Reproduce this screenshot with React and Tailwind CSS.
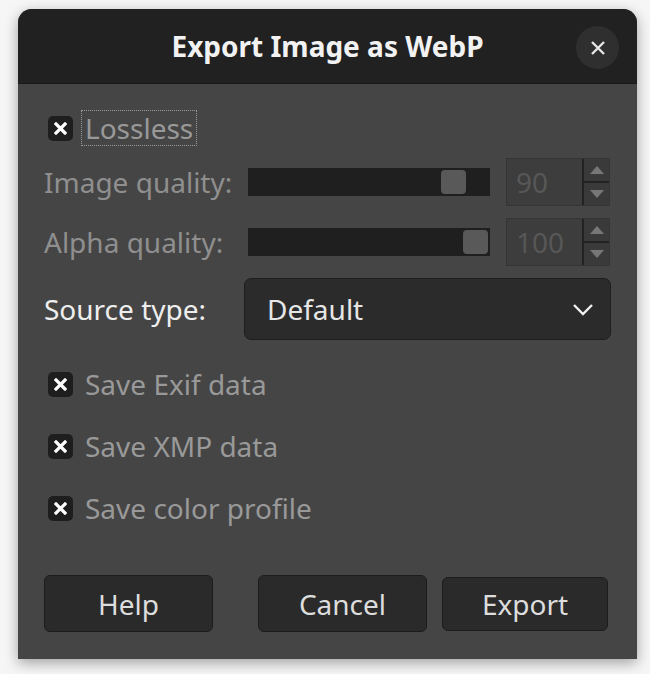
import React from 'react';

const font = { fontFamily: '"Noto Sans", "Open Sans", sans-serif' };

function Check({ label, focus }) {
  return (
    <div className="flex h-[36px] items-center pl-[4px]">
      <span className="flex h-[25px] w-[25px] shrink-0 items-center justify-center rounded-[5px] bg-[#1e1e1e]">
        <svg width="13" height="13" viewBox="0 0 13 13">
          <path d="M2 2 L11 11 M11 2 L2 11" stroke="#ffffff" strokeWidth="3.2" strokeLinecap="square" />
        </svg>
      </span>
      <span
        className={
          'ml-[9px] px-[3px] text-[28px] leading-[34px] text-[#999999] ' +
          (focus ? 'outline-1 outline-dotted outline-[#9a9a9a]' : '')
        }
      >
        {label}
      </span>
    </div>
  );
}

function Spin({ value }) {
  return (
    <div className="flex h-[48px] w-[104px] border border-[#353535]">
      <div className="flex flex-1 items-center bg-[#3d3d3d] pl-[9px] text-[28px] text-[#575757]">{value}</div>
      <div className="flex w-[27px] flex-col border-l-2 border-[#222222]">
        <div className="flex flex-1 items-center justify-center border-b-2 border-[#222222] bg-[#3a3a3a]">
          <svg width="14" height="8" viewBox="0 0 14 8"><path d="M0 8 L7 0 L14 8 Z" fill="#777777" /></svg>
        </div>
        <div className="flex flex-1 items-center justify-center bg-[#3a3a3a]">
          <svg width="14" height="8" viewBox="0 0 14 8"><path d="M0 0 L14 0 L7 8 Z" fill="#777777" /></svg>
        </div>
      </div>
    </div>
  );
}

function SliderRow({ label, pos, value }) {
  return (
    <div className="flex h-[48px] items-center">
      <span className="w-[204px] text-[28px] text-[#8f8f8f]">{label}</span>
      <div className="relative h-[28px] w-[242px] bg-[#1f1f1f]">
        <span className="absolute top-[2px] h-[24px] w-[25px] rounded-[4px] bg-[#595959]" style={{ left: pos }} />
      </div>
      <div className="ml-[16px]">
        <Spin value={value} />
      </div>
    </div>
  );
}

function Button({ children, className }) {
  return (
    <button
      className={
        'flex items-center justify-center rounded-[6px] border border-[#1c1c1c] bg-[#2a2a2a] text-[28px] text-[#dddddd] ' +
        className
      }
    >
      {children}
    </button>
  );
}

export default function App() {
  return (
    <div className="min-h-[674px] w-[650px] bg-[#f6f6f6] pt-[9px]" style={font}>
      <div className="ml-[18px] flex h-[650px] w-[619px] flex-col overflow-hidden rounded-t-[14px] bg-[#454545] shadow-[0_4px_14px_rgba(0,0,0,0.35)]">
        {/* Header bar */}
        <header className="relative flex h-[75px] shrink-0 items-center justify-center border-b border-[#1a1a1a] bg-[#212121]">
          <h1 className="text-[28px] font-bold text-[#f2f2f2]">Export Image as WebP</h1>
          <button className="absolute right-[18px] top-[17px] flex h-[43px] w-[43px] items-center justify-center rounded-full bg-[#2f2f2f]">
            <svg width="16" height="16" viewBox="0 0 16 16">
              <path d="M2 2 L14 14 M14 2 L2 14" stroke="#e6e6e6" strokeWidth="2.4" />
            </svg>
          </button>
        </header>

        {/* Body */}
        <div className="flex flex-1 flex-col px-[26px] pt-[26px]">
          <Check label="Lossless" focus />

          <div className="mt-[12px] flex flex-col gap-[12px]">
            <SliderRow label="Image quality:" pos={193} value="90" />
            <SliderRow label="Alpha quality:" pos={215} value="100" />
          </div>

          <div className="mt-[12px] flex h-[62px] items-center">
            <span className="w-[200px] text-[28px] text-[#eeeeee]">Source type:</span>
            <div className="flex h-[62px] flex-1 items-center justify-between rounded-[7px] border border-[#1e1e1e] bg-[#2b2b2b] pl-[22px] pr-[16px]">
              <span className="text-[28px] text-[#e6e6e6]">Default</span>
              <svg width="22" height="13" viewBox="0 0 22 13">
                <path d="M2 2 L11 11 L20 2" fill="none" stroke="#f0f0f0" strokeWidth="2.4" />
              </svg>
            </div>
          </div>

          <div className="mt-[26px] flex flex-col gap-[26px]">
            <Check label="Save Exif data" />
            <Check label="Save XMP data" />
            <Check label="Save color profile" />
          </div>

          <div className="mt-[49px] flex items-center">
            <Button className="h-[57px] w-[169px]">Help</Button>
            <Button className="ml-[45px] h-[57px] w-[169px]">Cancel</Button>
            <Button className="ml-[15px] h-[54px] w-[166px]">Export</Button>
          </div>
        </div>
      </div>
    </div>
  );
}
